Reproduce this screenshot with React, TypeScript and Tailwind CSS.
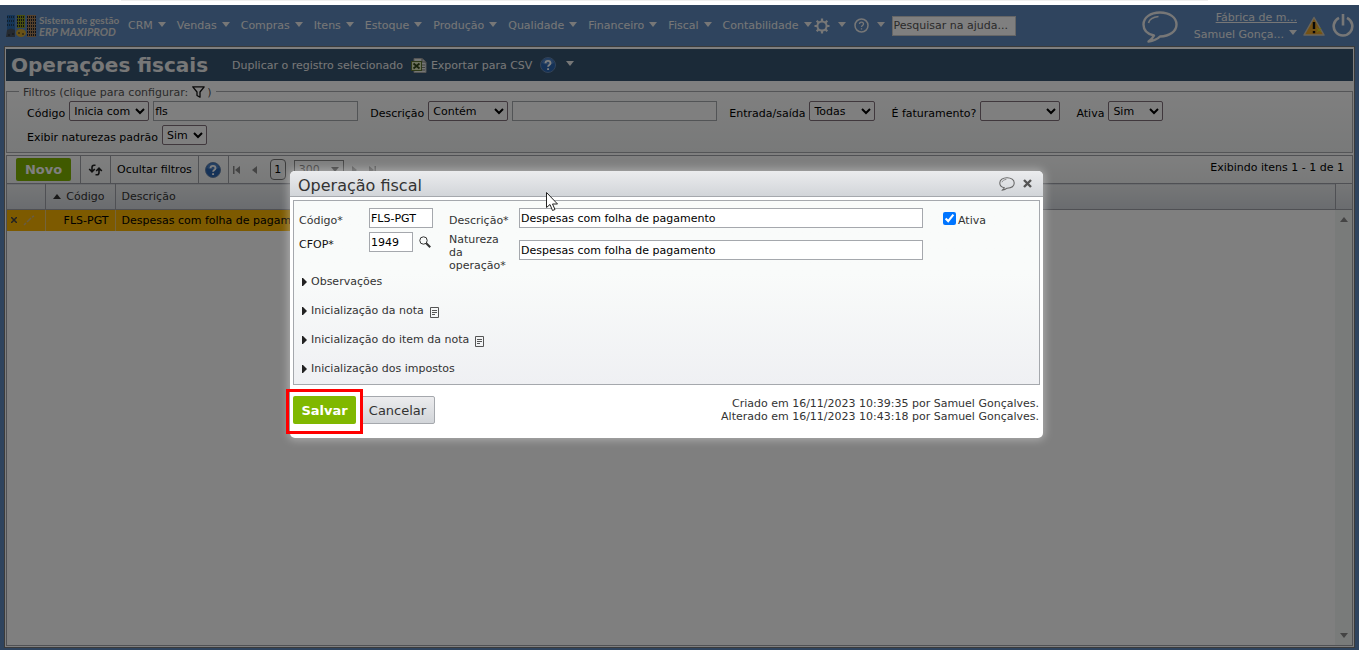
import type { ReactNode } from 'react'

const menus = [
  'CRM',
  'Vendas',
  'Compras',
  'Itens',
  'Estoque',
  'Produção',
  'Qualidade',
  'Financeiro',
  'Fiscal',
  'Contabilidade',
]

const sections = [
  { title: 'Observações', note: false },
  { title: 'Inicialização da nota', note: true },
  { title: 'Inicialização do item da nota', note: true },
  { title: 'Inicialização dos impostos', note: false },
]

function Caret({ className = '' }: { className?: string }) {
  return (
    <svg viewBox="0 0 8 5" className={`h-[5px] w-2 shrink-0 ${className}`} fill="currentColor">
      <path d="M0 0h8L4 5z" />
    </svg>
  )
}

function Logo() {
  return (
    <svg viewBox="0 0 30 22" className="h-[22px] w-[30px] shrink-0">
      <rect x="1" y="0" width="8" height="16" fill="#2c6cb0" />
      <path d="M1 15q4-3 8 0v7H0z" fill="#4a5560" />
      <rect x="11" y="0" width="8" height="13" fill="#8f9c1c" />
      <ellipse cx="15" cy="18" rx="5" ry="4" fill="#d3a52c" />
      <rect x="21" y="0" width="9" height="22" fill="#a98058" />
      <path
        d="M11 2h8M11 5h8M11 8h8M11 11h8M21 2h9M21 5h9M21 8h9M21 11h9M21 14h9M21 17h9M21 20h9"
        stroke="#20242c"
        strokeDasharray="1 1"
        strokeWidth="2"
      />
      <path d="M1 2h8M1 6h8M1 10h8" stroke="#20405c" strokeDasharray="1 1" strokeWidth="2" />
      <path d="M2 20h2M6 19h2M12 18h2M16 19h2" stroke="#20242c" />
    </svg>
  )
}

function GearIcon() {
  return (
    <svg viewBox="0 0 16 16" className="size-4 shrink-0" fill="none" stroke="currentColor">
      <circle cx="8" cy="8" r="4.600" strokeWidth="2" />
      <path
        d="M8 .5v3M8 12.500v3M.5 8h3M12.500 8h3M2.700 2.700l2 2M11.300 11.300l2 2M2.700 13.300l2-2M11.300 4.700l2-2"
        strokeWidth="2.200"
      />
    </svg>
  )
}

function HelpOutline() {
  return (
    <svg viewBox="0 0 15 15" className="size-[15px] shrink-0" fill="none" stroke="currentColor">
      <circle cx="7.500" cy="7.500" r="6.500" strokeWidth="1.500" />
      <path d="M5.500 6c0-2.600 4-2.600 4 0 0 1.500-2 1.500-2 3M7.500 10.200v1.400" strokeWidth="1.300" />
    </svg>
  )
}

function HelpBall() {
  return (
    <svg viewBox="0 0 16 16" className="size-4 shrink-0">
      <circle cx="8" cy="8" r="7.500" fill="#2a65b0" stroke="#6684ac" />
      <path d="M2 6a6.200 6.200 0 0 1 12 0Q8 9 2 6z" fill="#4f83c6" />
      <path
        d="M5.500 6.300c0-3.200 5-3.200 5 0 0 1.800-2.400 1.700-2.400 3.400M8.100 11.200v1.900"
        fill="none"
        stroke="#fff"
        strokeWidth="1.900"
      />
    </svg>
  )
}

function Bubble({ className }: { className: string }) {
  return (
    <svg viewBox="0 0 36 32" className={className} fill="none" stroke="currentColor">
      <path
        d="M12 24.500C5 23 1.500 19 1.500 13.500 1.500 6.500 8.500 1.500 18 1.500s16.500 5 16.500 12S27.500 25 18 25.500c-3 3-7 4.500-11.500 5 3-2 4.500-4 5.500-6z"
        strokeWidth="2.400"
        strokeLinejoin="round"
      />
      <path d="M6.500 12c.8-3.500 5-6 10-6.500" strokeWidth="1.600" />
    </svg>
  )
}

function Funnel() {
  return (
    <svg viewBox="0 0 13 12" className="mb-0.5 ml-1 mr-0.5 h-3 w-[13px]" fill="none" stroke="#111" strokeWidth="1.300">
      <path d="M.8.8h11.400L8 6v5.200L5 9.500V6z" strokeLinejoin="round" />
    </svg>
  )
}

function CsvIcon() {
  return (
    <svg viewBox="0 0 16 15" className="h-[15px] w-4 shrink-0">
      <path d="M3 .5h8L15 4v10.500H3z" fill="#e8ece8" stroke="#aaa" />
      <path d="M11 .5V4h4M11 7h3M11 9.500h3M11 12h3" fill="none" stroke="#777" />
      <rect x=".5" y="3.500" width="10" height="9" fill="#dfe8bf" stroke="#5e7430" />
      <path d="M2.500 5.500l6 5M8.500 5.500l-6 5" stroke="#33461a" strokeWidth="1.800" />
    </svg>
  )
}

function Warning() {
  return (
    <svg viewBox="0 0 22 20" className="h-5 w-[22px] shrink-0">
      <path d="M11 1.500L21 19H1z" fill="#eba428" stroke="#cfc6b4" strokeWidth="1.500" strokeLinejoin="round" />
      <path d="M11 6v7M11 15v2.200" stroke="#111" strokeWidth="2.400" />
      <path d="M14 12l4 4M18 12l-4 4" stroke="#d6de20" />
    </svg>
  )
}

function Power() {
  return (
    <svg viewBox="0 0 22 23" className="h-[23px] w-[22px] shrink-0" fill="none" stroke="currentColor" strokeWidth="2.600">
      <path d="M7 3.800a9.300 9.300 0 1 0 8 0" />
      <path d="M11 0v11.500" />
    </svg>
  )
}

function NoteIcon() {
  return (
    <svg viewBox="0 0 9 11" className="mt-1 h-[11px] w-[9px]" fill="none" stroke="#555">
      <path d="M.5.5h8v10h-8zM2 3.500h5M2 5.500h5M2 7.500h3" />
    </svg>
  )
}

function Filter({ label, id, children }: { label: string; id: string; children: ReactNode }) {
  return (
    <div className="flex items-center gap-1">
      <label htmlFor={id} className="pt-1">{label}</label>
      {children}
    </div>
  )
}

const selectClass = 'h-5 rounded-[2px] border border-[#80707a] bg-white text-[11px] text-black'
const inputClass = 'h-5 border border-[#a5a8ad] bg-white px-px text-[11px] text-black'

function NavBar() {
  return (
    <header className="flex h-[41px] shrink-0 items-center bg-[#5f89bc] pl-1.5 pr-[5px] text-[#eee]">
      <Logo />
      <div className="ml-[3px] w-[89px] shrink-0 font-[Lato,sans-serif] font-bold leading-3 text-[#ddd]">
        <div className="text-[10px]">Sistema de gestão</div>
        <div className="text-[11px] italic">ERP MAXIPROD</div>
      </div>
      <nav className="flex shrink-0 items-center gap-[11px]">
        {menus.map((menu) => (
          <button key={menu} className="flex items-center gap-[5px]">
            {menu}
            <Caret className="mb-[3px]" />
          </button>
        ))}
      </nav>
      <div className="ml-0.5 flex shrink-0 items-center gap-2">
        <button aria-label="Configurações" className="flex items-center gap-2">
          <GearIcon />
          <Caret className="mb-[3px]" />
        </button>
        <button aria-label="Ajuda" className="flex items-center gap-2">
          <HelpOutline />
          <Caret className="mb-[3px]" />
        </button>
      </div>
      <input
        aria-label="Pesquisar na ajuda"
        placeholder="Pesquisar na ajuda..."
        className="ml-[7px] h-5 w-[124px] border border-[#ccc] bg-white px-px text-[11px] placeholder:text-[#555]"
      />
      <div className="ml-auto flex items-center">
        <button aria-label="Mensagens">
          <Bubble className="mt-0.5 h-8 w-9" />
        </button>
        <div className="ml-3.5 flex w-[105px] flex-col items-end whitespace-nowrap leading-[17px]">
          <a href="#empresa" className="underline">Fábrica de m...</a>
          <button className="flex items-center gap-[5px]">
            Samuel Gonça... <Caret className="mb-1" />
          </button>
        </div>
        <button aria-label="Avisos" className="ml-1.5">
          <Warning />
        </button>
        <button aria-label="Sair" className="ml-[7px]">
          <Power />
        </button>
      </div>
    </header>
  )
}

function Filters() {
  return (
    <fieldset className="mt-[3px] h-[69px] shrink-0 border border-[#a8aaae] bg-linear-to-b from-white to-[#f1f3f3] pl-5">
      <legend className="-ml-2 flex h-[14px] items-center px-1 pt-[3px] text-[#555]">
        Filtros (clique para configurar: <Funnel />)
      </legend>
      <div className="mt-[3px] flex flex-wrap items-start gap-x-3 gap-y-1">
        <Filter label="Código" id="codigo">
          <select id="codigo" className={`${selectClass} w-20`}>
            <option>Inicia com</option>
          </select>
          <input aria-label="Valor do código" defaultValue="fls" className={`${inputClass} w-[205px]`} />
        </Filter>
        <Filter label="Descrição" id="descricao">
          <select id="descricao" className={`${selectClass} w-20`}>
            <option>Contém</option>
          </select>
          <input aria-label="Valor da descrição" className={`${inputClass} w-[205px]`} />
        </Filter>
        <Filter label="Entrada/saída" id="entrada">
          <select id="entrada" className={`${selectClass} w-[66px]`}>
            <option>Todas</option>
          </select>
        </Filter>
        <div className="ml-1">
          <Filter label="É faturamento?" id="faturamento">
            <select id="faturamento" className={`${selectClass} w-20`}>
              <option></option>
            </select>
          </Filter>
        </div>
        <div className="ml-1">
          <Filter label="Ativa" id="ativa-filtro">
            <select id="ativa-filtro" className={`${selectClass} w-[55px]`}>
              <option>Sim</option>
            </select>
          </Filter>
        </div>
        <div className="basis-full">
          <Filter label="Exibir naturezas padrão" id="padrao">
            <select id="padrao" className={`${selectClass} w-[45px]`}>
              <option>Sim</option>
            </select>
          </Filter>
        </div>
      </div>
    </fieldset>
  )
}

function Grid() {
  return (
    <section className="mt-0.5 flex min-h-0 flex-1 flex-col border border-[#a0a3a8]">
      <div className="flex h-[27px] shrink-0 items-center bg-linear-to-b from-white to-[#f1f3f3] pl-[9px] pr-2">
        <button className="h-[23px] w-[55px] rounded-[2px] bg-[#80b500] text-[13px] font-bold text-white">Novo</button>
        <button aria-label="Atualizar" className="ml-[9px] flex h-full w-[31px] items-center justify-center border-x border-[#a0a3a8]">
          <svg viewBox="0 0 15 12" className="h-3 w-[15px]" fill="none" stroke="#222" strokeWidth="1.600">
            <path d="M7.500 1.200H6Q4 1.200 4 3.500v4M1.200 5L4 7.800 6.800 5" />
            <path d="M7.500 10.800H9q2 0 2-2.300v-4M8.200 7L11 4.200 13.800 7" />
          </svg>
        </button>
        <button className="h-full border-r border-[#a0a3a8] px-1.5">Ocultar filtros</button>
        <button aria-label="Ajuda da lista" className="flex h-full w-[30px] items-center justify-center border-r border-[#a0a3a8]">
          <HelpBall />
        </button>
        <button aria-label="Primeira página" className="ml-1">
          <svg viewBox="0 0 7 8" className="h-2 w-[7px]" fill="#888"><path d="M0 0h1.500v8H0zM7 0v8L2 4z" /></svg>
        </button>
        <button aria-label="Página anterior" className="ml-3">
          <svg viewBox="0 0 5 8" className="h-2 w-[5px]" fill="#888"><path d="M5 0v8L0 4z" /></svg>
        </button>
        <button className="ml-[13px] h-[21px] w-4 rounded-[4px] border border-[#777]">1</button>
        <button className="ml-2 flex h-[19px] w-[50px] items-center justify-between border border-[#888] px-1 text-[#777]">
          300 <Caret />
        </button>
        <button aria-label="Próxima página" className="ml-2">
          <svg viewBox="0 0 5 8" className="h-2 w-[5px]" fill="#aaa"><path d="M0 0v8l5-4z" /></svg>
        </button>
        <button aria-label="Última página" className="ml-3">
          <svg viewBox="0 0 7 8" className="h-2 w-[7px]" fill="#aaa"><path d="M5.500 0H7v8H5.500zM0 0v8l5-4z" /></svg>
        </button>
        <span className="ml-auto pb-1">Exibindo itens 1 - 1 de 1</span>
      </div>
      <div className="flex min-h-0 flex-1">
        <div className="min-w-0 flex-1">
          <table className="w-full table-fixed border-collapse text-left">
            <thead>
              <tr className="h-[26px] border-y border-[#9ea1a8] bg-linear-to-b from-[#eceeef] to-[#d5d9df] text-[#333]">
                <th className="w-[38px] border-r border-[#9ea1a8]"></th>
                <th className="w-[70px] border-r border-[#9ea1a8] font-normal">
                  <span className="flex items-center justify-end gap-[5px] pr-2.5">
                    <Caret className="rotate-180" />Código
                  </span>
                </th>
                <th className="w-[176px] pl-1.5 font-normal">Descrição</th>
                <th></th>
              </tr>
            </thead>
            <tbody>
              <tr className="h-[21px] text-black">
                <td className="border-r border-[#e8c878] bg-[#fab400]">
                  <span className="flex items-center gap-1.5 pl-1">
                    <svg viewBox="0 0 6 6" className="size-1.5" stroke="#444" strokeWidth="1.500"><path d="M0 0l6 6M6 0L0 6" /></svg>
                    <svg viewBox="0 0 12 11" className="h-[11px] w-3" stroke="#d0b888" fill="none"><path d="M1 10l2-2M4 7l4-4M9 2l2-1" strokeWidth="1.500" /></svg>
                  </span>
                </td>
                <td className="border-r border-[#e8c878] bg-[#fab400] pr-1.5 text-right">FLS-PGT</td>
                <td className="overflow-hidden whitespace-nowrap bg-[#fab400] pl-1.5">Despesas com folha de pagamento</td>
                <td></td>
              </tr>
            </tbody>
          </table>
        </div>
        <div className="flex w-[17px] shrink-0 flex-col">
          <div className="h-[27px] border-y border-l border-[#9ea1a8] bg-linear-to-b from-[#eceeef] to-[#d5d9df]" />
          <div className="flex flex-1 flex-col items-center justify-between bg-[#f3f6f5] py-[7px] text-[#888]">
            <Caret className="rotate-180" />
            <Caret />
          </div>
        </div>
      </div>
    </section>
  )
}

function OperationDialog() {
  return (
    <div
      role="dialog"
      aria-labelledby="dialog-title"
      className="relative w-[753px] max-w-full rounded-[5px] bg-white text-[#333] shadow-[0_0_8px_2px_rgba(255,255,255,0.35)]"
    >
      <div className="flex h-[26px] items-center rounded-t-[5px] border-b border-[#a5a8ad] bg-linear-to-b from-[#ebecee] to-[#d2d5d9] pl-2 pr-[11px]">
        <h2 id="dialog-title" className="pt-1 text-[16px] leading-5">Operação fiscal</h2>
        <button aria-label="Comentários" className="ml-auto text-[#666]">
          <Bubble className="h-[14px] w-4" />
        </button>
        <button aria-label="Fechar" className="ml-2">
          <svg viewBox="0 0 9 9" className="size-[9px]" stroke="#555" strokeWidth="2.400"><path d="M1 1l7 7M8 1L1 8" /></svg>
        </button>
      </div>

      <form className="mx-[3px] mt-[3px] border border-[#a5a8ad] bg-linear-to-b from-[#f9fbfa] from-40% to-[#eff0f3] pb-1.5">
        <div className="grid grid-cols-[70px_80px_70px_1fr_96px] pl-[5px] pt-[7px]">
          <label htmlFor="op-codigo" className="pt-1.5">Código*</label>
          <input id="op-codigo" defaultValue="FLS-PGT" className={`${inputClass} w-16`} />
          <label htmlFor="op-descricao" className="pt-1.5">Descrição*</label>
          <input id="op-descricao" defaultValue="Despesas com folha de pagamento" className={`${inputClass} mr-5`} />
          <label className="flex items-start gap-0.5">
            <input type="checkbox" defaultChecked className="mt-1 size-[13px]" />
            <span className="pt-1.5">Ativa</span>
          </label>

          <label htmlFor="op-cfop" className="pt-2.5 text-[#111]">CFOP*</label>
          <div className="flex h-6 items-center gap-1.5 pt-1">
            <input id="op-cfop" defaultValue="1949" className={`${inputClass} w-11`} />
            <button type="button" aria-label="Pesquisar CFOP">
              <svg viewBox="0 0 12 12" className="size-3" fill="none" stroke="#333">
                <circle cx="4.500" cy="4.500" r="3.700" />
                <path d="M7.200 7.200l4 4" strokeWidth="2" />
              </svg>
            </button>
          </div>
          <label htmlFor="op-natureza" className="w-[60px] pt-[5px]">Natureza da operação*</label>
          <input id="op-natureza" defaultValue="Despesas com folha de pagamento" className={`${inputClass} mr-5 mt-3`} />
        </div>
        <div className="flex flex-col items-start gap-2.5 pl-2">
          {sections.map((section) => (
            <button key={section.title} type="button" className="flex h-[19px] items-center">
              <svg viewBox="0 0 5 8" className="mr-1 h-2 w-[5px]" fill="#222"><path d="M0 0h1l4 4-4 4H0z" /></svg>
              <span className="mr-1.5">{section.title}</span>
              {section.note && <NoteIcon />}
            </button>
          ))}
        </div>
      </form>

      <div className="flex items-start px-[3px] pb-[14px] pt-[11px]">
        <div className="relative">
          <button className="h-7 w-[63px] rounded-[2px] bg-[#80b800] text-[13px] font-bold text-white">Salvar</button>
          <div className="pointer-events-none absolute -inset-x-[7px] -bottom-2.5 -top-[7px] z-10 border-3 border-[#ff0000]" />
        </div>
        <button className="ml-1 h-7 w-[75px] rounded-[2px] border border-[#a5a8ad] bg-linear-to-b from-[#ececee] to-[#d2d5d9] text-[13px]">
          Cancelar
        </button>
        <p className="ml-auto pr-px pt-px text-right">
          Criado em 16/11/2023 10:39:35 por Samuel Gonçalves.
          <br />
          Alterado em 16/11/2023 10:43:18 por Samuel Gonçalves.
        </p>
      </div>

      {/* mouse pointer */}
      <svg viewBox="0 0 12 19" className="pointer-events-none absolute left-64 top-[21px] h-[19px] w-3">
        <path d="M.5.5v15l3.500-3 2.500 6 2.500-1-2.500-5.500h5z" fill="#fff" stroke="#222" />
      </svg>
    </div>
  )
}

export default function App() {
  return (
    <div className="flex h-screen flex-col bg-white font-['DejaVu_Sans',Verdana,sans-serif] text-[11px] leading-[13px]">
      <div className="h-[5px] shrink-0">
        <div className="ml-[121px] mr-[151px] h-px bg-[#eee]" />
      </div>
      <div className="relative flex min-h-0 flex-1 flex-col overflow-hidden">
        <NavBar />
        <div className="flex min-h-0 flex-1 bg-[#5f89bc] px-1 pb-[2px]">
          <main className="flex min-w-0 flex-1 flex-col border border-[#777] bg-white p-px pt-0.5">
            <div className="flex h-8 shrink-0 items-center bg-[#365470] pl-[5px] text-[#eee]">
              <h1 className="text-[20px] font-bold leading-6">Operações fiscais</h1>
              <button className="ml-6">Duplicar o registro selecionado</button>
              <button className="ml-2 flex items-center gap-1">
                <CsvIcon />
                Exportar para CSV
              </button>
              <button aria-label="Ajuda da página" className="ml-2 flex items-center gap-2.5">
                <HelpBall />
                <Caret className="mb-1" />
              </button>
            </div>
            <Filters />
            <Grid />
          </main>
        </div>
        <div className="absolute inset-0 flex items-start justify-center bg-black/50 pr-[26px] pt-[166px]">
          <OperationDialog />
        </div>
      </div>
    </div>
  )
}
